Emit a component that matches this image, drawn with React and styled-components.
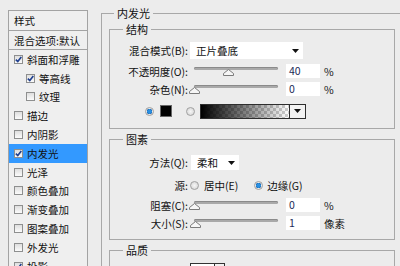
import React from 'react';
import styled, { createGlobalStyle } from 'styled-components';

const GlobalStyle = createGlobalStyle`
  html, body {
    margin: 0;
    padding: 0;
    background: #ececec;
  }
  body {
    font-family: "Noto Sans CJK SC", "Noto Sans", sans-serif;
    font-size: 10.5px;
    color: #111;
  }
`;

const styleItems = [
  { name: '斜面和浮雕', checked: true },
  { name: '等高线', checked: true, indent: true },
  { name: '纹理', checked: false, indent: true },
  { name: '描边', checked: false },
  { name: '内阴影', checked: false },
  { name: '内发光', checked: true, selected: true },
  { name: '光泽', checked: false },
  { name: '颜色叠加', checked: false },
  { name: '渐变叠加', checked: false },
  { name: '图案叠加', checked: false },
  { name: '外发光', checked: false },
  { name: '投影', checked: true },
];

const CheckMark = () => (
  <svg width="7" height="7" viewBox="0 0 7 7">
    <path d="M0.8 3.6 L2.8 5.6 L6.3 1" fill="none" stroke="#1f3f8f" strokeWidth="1.6" />
  </svg>
);

const DownArrow = () => (
  <svg width="7" height="4" viewBox="0 0 7 4">
    <path d="M0 0 H7 L3.5 4 Z" fill="#111" />
  </svg>
);

const ThumbShape = () => (
  <svg width="11" height="7" viewBox="0 0 11 7">
    <path d="M5.5 0.5 L10.5 4.5 V6.5 H0.5 V4.5 Z" fill="#f6f6f6" stroke="#7b7b7b" strokeWidth="1" />
  </svg>
);

const Slider = ({ value }) => (
  <StSlider>
    <StTrack />
    <StThumb style={{ left: `calc(${value}% - 5px)` }}>
      <ThumbShape />
    </StThumb>
  </StSlider>
);

const Field = ({ label, value, percent, unit, mt }) => (
  <StRow $h={18} $mt={mt}>
    <StLabel>{label}</StLabel>
    <StControls>
      <Slider value={percent} />
      <StNumber>{value}</StNumber>
      <StUnit>{unit}</StUnit>
    </StControls>
  </StRow>
);

const App = () => {
  return (
    <>
      <GlobalStyle />
      <StPage>
        <StSidebar>
          <StHead $h={19}>样式</StHead>
          <StHead $h={18}>混合选项:默认</StHead>
          {styleItems.map((item) => (
            <StItem key={item.name} $indent={item.indent} $selected={item.selected}>
              <StCheck>{item.checked && <CheckMark />}</StCheck>
              {item.name}
            </StItem>
          ))}
        </StSidebar>

        <StMain>
          <StOuter>
            <StLegend $ml={5}>内发光</StLegend>

            <StGroup $pt={5} $pb={7}>
              <StLegend $ml={13}>结构</StLegend>
              <StRow $h={19}>
                <StLabel>混合模式(B):</StLabel>
                <StControls>
                  <StSelect $w={113} $h={17} $ml={2}>
                    正片叠底
                    <DownArrow />
                  </StSelect>
                </StControls>
              </StRow>
              <Field label="不透明度(O):" value="40" percent={40} unit="%" mt={2} />
              <Field label="杂色(N):" value="0" percent={0} unit="%" />
              <StColorRow>
                <StRadio $checked />
                <StSwatch />
                <StRadio />
                <StGradient>
                  <StGradientFill />
                  <StGradientArrow>
                    <DownArrow />
                  </StGradientArrow>
                </StGradient>
              </StColorRow>
            </StGroup>

            <StGroup $pt={8} $pb={7} $mt={3}>
              <StLegend $ml={13}>图素</StLegend>
              <StRow $h={17}>
                <StLabel>方法(Q):</StLabel>
                <StControls>
                  <StSelect $w={48} $h={15} $ml={3}>
                    柔和
                    <DownArrow />
                  </StSelect>
                </StControls>
              </StRow>
              <StRow $h={18} $mt={5}>
                <StLabel>源:</StLabel>
                <StControls>
                  <StRadio $ml={2} />
                  <StRadioText $ml={5}>居中(E)</StRadioText>
                  <StRadio $checked $ml={16} />
                  <StRadioText $ml={4}>边缘(G)</StRadioText>
                </StControls>
              </StRow>
              <Field label="阻塞(C):" value="0" percent={0} unit="%" mt={2} />
              <Field label="大小(S):" value="1" percent={1} unit="像素" />
            </StGroup>

            <StGroup $pt={6} $pb={20} $mt={3}>
              <StLegend $ml={13}>品质</StLegend>
              <StContour>
                <StContourPreview />
                <StContourArrow />
              </StContour>
            </StGroup>
          </StOuter>
        </StMain>
      </StPage>
    </>
  );
};

export default App;

const StPage = styled.div`
  width: 400px;
  height: 266px;
  overflow: hidden;
  display: flex;
  align-items: flex-start;
  padding: 6px 0 0 8px;
  box-sizing: border-box;
`;

const StSidebar = styled.div`
  flex: 0 0 80px;
  margin-top: 4px;
  border: 1px solid #a3a3a3;
  border-bottom: none;
  background: #efefef;
  box-sizing: border-box;
`;

const StHead = styled.div`
  height: ${(p) => p.$h}px;
  display: flex;
  align-items: center;
  padding-left: 5px;
  border-bottom: 1px solid #a3a3a3;
  white-space: nowrap;
`;

const StItem = styled.div`
  height: 18.8px;
  display: flex;
  align-items: center;
  gap: 4px;
  padding-left: ${(p) => (p.$indent ? 17 : 5)}px;
  background: ${(p) => (p.$selected ? '#3399ff' : 'transparent')};
  white-space: nowrap;
`;

const StCheck = styled.span`
  width: 9px;
  height: 9px;
  box-sizing: border-box;
  border: 1px solid #8e8f8f;
  background: linear-gradient(#dedede, #fbfbfb);
  display: flex;
  align-items: center;
  justify-content: center;
  flex-shrink: 0;
`;

const StMain = styled.div`
  flex: 0 0 auto;
  margin-left: 13px;
`;

const StOuter = styled.fieldset`
  margin: 0;
  width: 320px;
  padding: 2px 0 0 7px;
  border: 1px solid #a8a8a8;
  box-sizing: border-box;
  min-width: 0;
`;

const StGroup = styled.fieldset`
  margin: ${(p) => p.$mt || 0}px 0 0 0;
  width: 286px;
  padding: ${(p) => p.$pt}px 0 ${(p) => p.$pb}px 0;
  border: 1px solid #a8a8a8;
  box-sizing: border-box;
  min-width: 0;
`;

const StLegend = styled.legend`
  margin-left: ${(p) => p.$ml}px;
  padding: 0 3px;
  font-size: 11px;
  line-height: 14px;
  height: 14px;
`;

const StRow = styled.div`
  height: ${(p) => p.$h}px;
  margin-top: ${(p) => p.$mt || 0}px;
  display: grid;
  grid-template-columns: 78px 1fr;
  align-items: center;
`;

const StLabel = styled.span`
  text-align: right;
  white-space: nowrap;
`;

const StControls = styled.div`
  display: flex;
  align-items: center;
  height: 100%;
`;

const StSelect = styled.div`
  width: ${(p) => p.$w}px;
  height: ${(p) => p.$h}px;
  margin-left: ${(p) => p.$ml}px;
  background: #fff;
  box-sizing: border-box;
  display: flex;
  align-items: center;
  justify-content: space-between;
  padding: 0 4px 0 6px;
`;

const StSlider = styled.div`
  position: relative;
  width: 84px;
  height: 10px;
  margin-left: 6px;
`;

const StTrack = styled.div`
  margin-top: 1px;
  height: 3px;
  border-radius: 2px;
  background: #a9a9a9;
  box-shadow: inset 0 1px 0 #8a8a8a;
`;

const StThumb = styled.div`
  position: absolute;
  top: 3px;
  width: 11px;
  height: 7px;
  display: flex;
`;

const StNumber = styled.div`
  width: 34px;
  height: 14px;
  margin-left: 8px;
  background: #fff;
  padding-left: 3px;
  box-sizing: border-box;
  line-height: 14px;
  color: #1b2b58;
`;

const StUnit = styled.span`
  margin-left: 4px;
  white-space: nowrap;
`;

const StColorRow = styled.div`
  height: 20px;
  margin-top: 3px;
  display: flex;
  align-items: center;
  padding-left: 35px;
`;

const StRadio = styled.span`
  width: 9px;
  height: 9px;
  margin-left: ${(p) => p.$ml || 0}px;
  border-radius: 50%;
  box-sizing: border-box;
  border: 1px solid #a0a0a0;
  background: ${(p) =>
    p.$checked
      ? 'radial-gradient(circle, #2a8fe0 0 2px, #0d4f9a 2.6px, #e8e8e8 3px)'
      : 'radial-gradient(circle, #f6f6f6 0, #d8d8d8 4px)'};
  flex-shrink: 0;
`;

const StSwatch = styled.span`
  width: 12px;
  height: 12px;
  margin: 0 14px 0 6px;
  background: #000;
  border: 1px solid #666;
  box-sizing: border-box;
`;

const StRadioText = styled.span`
  margin-left: ${(p) => p.$ml}px;
  white-space: nowrap;
`;

const StGradient = styled.div`
  width: 106px;
  height: 15px;
  margin-left: 5px;
  border: 1px solid #2e2e2e;
  box-sizing: border-box;
  display: flex;
`;

const StGradientFill = styled.div`
  flex: 1;
  background:
    linear-gradient(to right, rgba(0, 0, 0, 1), rgba(0, 0, 0, 0)),
    repeating-conic-gradient(#cfcfcf 0 25%, #ffffff 0 50%) 0 0 / 6px 6px;
`;

const StGradientArrow = styled.div`
  width: 15px;
  border-left: 1px solid #2e2e2e;
  background: #f2f2f2;
  display: flex;
  align-items: center;
  justify-content: center;
`;

const StContour = styled.div`
  margin-left: 80px;
  width: 35px;
  height: 20px;
  border: 1px solid #333;
  box-sizing: border-box;
  display: flex;
`;

const StContourPreview = styled.div`
  flex: 1;
  background: #fff;
`;

const StContourArrow = styled.div`
  width: 9px;
  border-left: 1px solid #333;
  background: #f2f2f2;
`;
